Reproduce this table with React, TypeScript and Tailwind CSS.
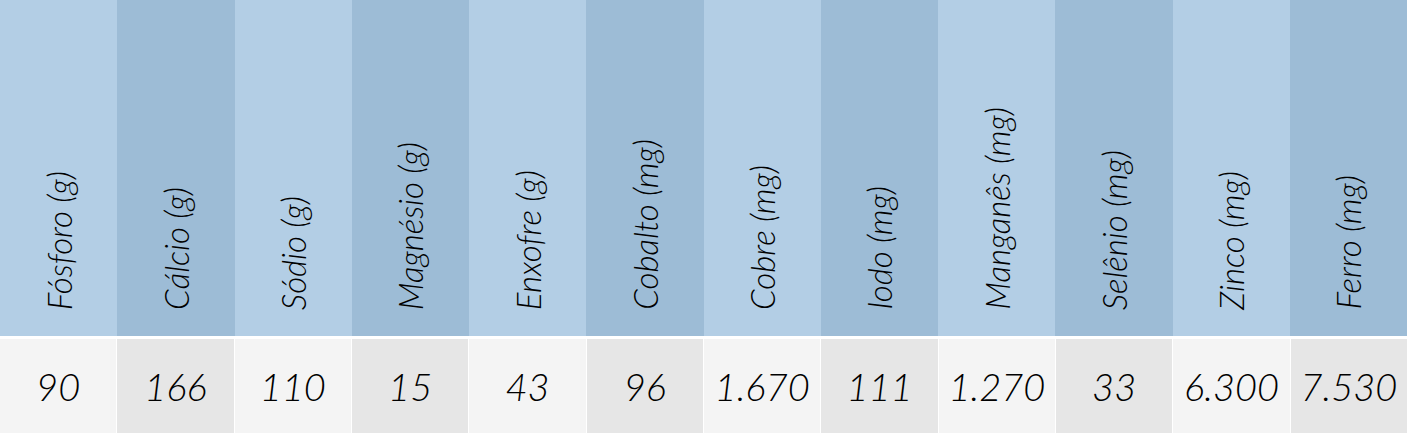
const minerals = [
  { name: "Fósforo (g)", value: "90" },
  { name: "Cálcio (g)", value: "166" },
  { name: "Sódio (g)", value: "110" },
  { name: "Magnésio (g)", value: "15" },
  { name: "Enxofre (g)", value: "43" },
  { name: "Cobalto (mg)", value: "96" },
  { name: "Cobre (mg)", value: "1.670" },
  { name: "Iodo (mg)", value: "111" },
  { name: "Manganês (mg)", value: "1.270" },
  { name: "Selênio (mg)", value: "33" },
  { name: "Zinco (mg)", value: "6.300" },
  { name: "Ferro (mg)", value: "7.530" },
];

export default function App() {
  return (
    <div className="w-[1409px] h-[433px] bg-white font-['Lato',sans-serif] italic font-light text-black overflow-hidden">
      <div className="grid grid-cols-12 w-[1407px] h-[336px]">
        {minerals.map((m, i) => (
          <div
            key={m.name}
            className={`flex items-end justify-center pb-[26px] ${i % 2 === 0 ? "bg-[#b3cee5]" : "bg-[#9dbcd6]"}`}
          >
            <span className="[writing-mode:vertical-rl] rotate-180 text-[33px] leading-[36px] whitespace-nowrap">
              {m.name}
            </span>
          </div>
        ))}
      </div>
      <div className="grid grid-cols-12 gap-px w-[1407px] h-[94px] mt-[3px]">
        {minerals.map((m, i) => (
          <div
            key={m.name}
            className={`flex items-center justify-center text-[38px] ${i % 2 === 0 ? "bg-[#f4f4f4]" : "bg-[#e6e6e6]"}`}
          >
            {m.value}
          </div>
        ))}
      </div>
    </div>
  );
}
